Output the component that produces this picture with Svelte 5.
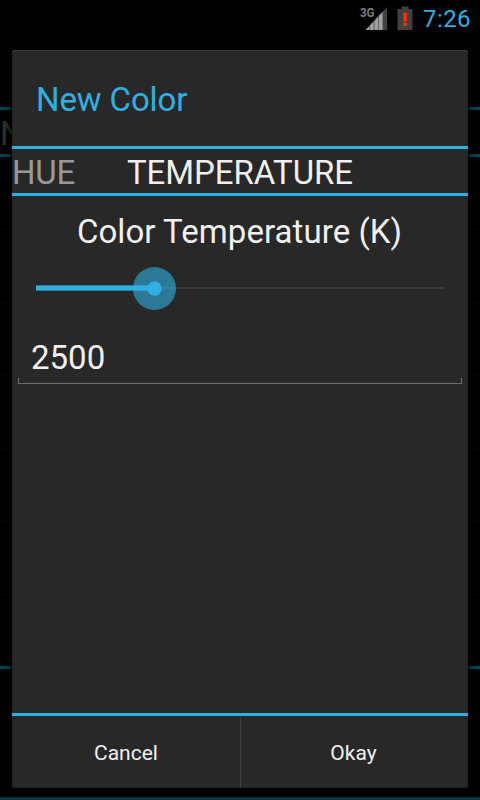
<script>
  let kelvin = $state(2500);
  const fraction = $derived((kelvin - 1000) / 5143);
  const bars = [0, 1, 2, 3, 4];
</script>

<div class="screen">
  <div class="behind">
    <div class="behind-tabs">N</div>
    <div class="behind-list">
      {#each [0, 1, 2, 3, 4, 5] as row (row)}
        <div class="row"></div>
      {/each}
    </div>
    <div class="behind-foot"></div>
  </div>

  <header class="status">
    <svg class="signal" width="30" height="32" viewBox="-2 -6 30 32">
      <text x="0" y="11" textLength="14.5" lengthAdjust="spacingAndGlyphs">3G</text>
      <defs>
        <clipPath id="wedge"><path d="M5.5 24 L27.2 1 V24 Z" /></clipPath>
      </defs>
      <g clip-path="url(#wedge)">
        <rect x="5.5" y="1" width="21.7" height="23" fill="#4a4a4a" />
        {#each bars as bar (bar)}
          <rect x={5.7 + bar * 4.4} y="1" width="3.7" height="23" fill={bar < 4 ? '#a0a0a0' : '#414141'} />
        {/each}
      </g>
    </svg>
    <svg class="battery" width="16" height="24" viewBox="0 0 16 24">
      <path d="M4.5 0.5h7.2V3h3.8v21H0.5V3h4z" fill="#404040" />
      <path d="M6 6.7h4.2l-.6 8.8h-3z" fill="#ff3000" />
      <rect x="6.3" y="16.8" width="3.6" height="3.2" fill="#ff3000" />
    </svg>
    <span class="clock">7:26</span>
  </header>

  <main class="dialog">
    <h1><span>New Color</span></h1>
    <nav>
      <span class="hue">HUE</span>
      <span class="temperature">TEMPERATURE</span>
    </nav>
    <section>
      <div class="label"><span>Color Temperature (K)</span></div>
      <div class="slider">
        <div class="track"></div>
        <div class="fill" style:width="{fraction * 100}%"></div>
        <div class="thumb" style:left="{fraction * 100}%"></div>
      </div>
      <div class="field">
        <span>{kelvin}</span>
        <div class="underline"></div>
      </div>
    </section>
    <footer>
      <button class="cancel"><span>Cancel</span></button>
      <button class="okay"><span>Okay</span></button>
    </footer>
  </main>
</div>

<style>
  :global(body) {
    margin: 0;
    background: #000;
  }
  .screen {
    position: relative;
    width: 480px;
    height: 800px;
    overflow: hidden;
    background: #000;
    font-family: Roboto, 'Noto Sans', sans-serif;
    color: #f0f0f0;
  }
  .behind {
    position: absolute;
    inset: 107px 0 0;
    display: flex;
    flex-direction: column;
  }
  .behind-tabs {
    box-sizing: border-box;
    height: 50px;
    border-top: 3px solid #004556;
    border-bottom: 3px solid #004556;
    font-size: 33px;
    line-height: 47px;
    color: #30352e;
  }
  .behind-list {
    height: 509px;
    overflow: hidden;
  }
  .row {
    box-sizing: border-box;
    height: 73px;
    border-bottom: 1px solid #040804;
  }
  .behind-foot {
    height: 128px;
    border-top: 3px solid #004556;
    border-bottom: 3px solid #003745;
  }
  .status {
    position: relative;
    box-sizing: border-box;
    height: 50px;
    display: flex;
    justify-content: flex-end;
    align-items: flex-start;
    padding: 0 9px 0 0;
  }
  .signal text {
    font: bold 13.5px Roboto, sans-serif;
    fill: #7e7e7e;
  }
  .battery {
    margin: 6px 0 0 9px;
  }
  .clock {
    width: 48px;
    margin: 6px 0 0 10px;
    font-size: 24px;
    line-height: 27px;
    letter-spacing: 0.4px;
    white-space: nowrap;
    text-align: right;
    color: #30b0e2;
  }
  .dialog {
    position: relative;
    box-sizing: border-box;
    width: 456px;
    height: 738px;
    margin: 0 12px;
    display: flex;
    flex-direction: column;
    background: #282828;
    border-radius: 3px;
    box-shadow:
      inset 0 1px 0 #3e3e3e,
      inset 0 0 0 1px #222,
      0 0 8px 1px #000;
    font-size: 33px;
  }
  h1 {
    box-sizing: border-box;
    height: 99px;
    margin: 0;
    padding: 3px 0 0 24px;
    border-bottom: 3px solid #30b0e2;
    font-size: 33px;
    font-weight: 400;
    line-height: 94px;
    letter-spacing: -0.12px;
    color: #30b0e2;
  }
  nav {
    box-sizing: border-box;
    height: 47px;
    display: flex;
    border-bottom: 3px solid #30b0e2;
    line-height: 47px;
    white-space: nowrap;
  }
  .hue {
    width: 115px;
    letter-spacing: -0.2px;
    color: #999;
  }
  .temperature {
    letter-spacing: -0.07px;
  }
  section {
    flex: 1;
  }
  .label {
    height: 70px;
    line-height: 71px;
    text-align: center;
  }
  .label span {
    margin-right: 1px;
    letter-spacing: 0.06px;
  }
  .slider {
    position: relative;
    height: 44px;
    margin: 0 24px;
  }
  .track {
    position: absolute;
    top: 21px;
    width: 100%;
    height: 2px;
    background: #3c3c3c;
  }
  .fill {
    position: absolute;
    top: 19px;
    box-sizing: border-box;
    height: 6px;
    background: #30b0e2;
    border-top: 1px solid #2b7ea0;
    border-bottom: 1px solid #2b7ea0;
  }
  .thumb {
    position: absolute;
    top: 0.5px;
    width: 43px;
    height: 43px;
    margin-left: -21.5px;
    border-radius: 50%;
    background: radial-gradient(circle, #30b0e2 6.7px, rgba(48, 176, 226, 0.6) 7.5px);
  }
  .field {
    height: 74px;
    margin: 0 6px;
    padding-left: 13px;
    position: relative;
    line-height: 95px;
  }
  .underline {
    position: absolute;
    left: 0;
    right: 0;
    bottom: 0;
    height: 5px;
    border: 1px solid #6d6d6d;
    border-top: 0;
  }
  footer {
    box-sizing: border-box;
    height: 75px;
    display: flex;
    border-top: 3px solid #30b0e2;
  }
  button {
    box-sizing: border-box;
    width: 228px;
    padding: 2px 0 0;
    border: 0;
    background: none;
    font: 21px Roboto, sans-serif;
    color: #f0f0f0;
  }
  .okay {
    padding-right: 2px;
    border-left: 1px solid #3e3e3e;
  }
</style>
